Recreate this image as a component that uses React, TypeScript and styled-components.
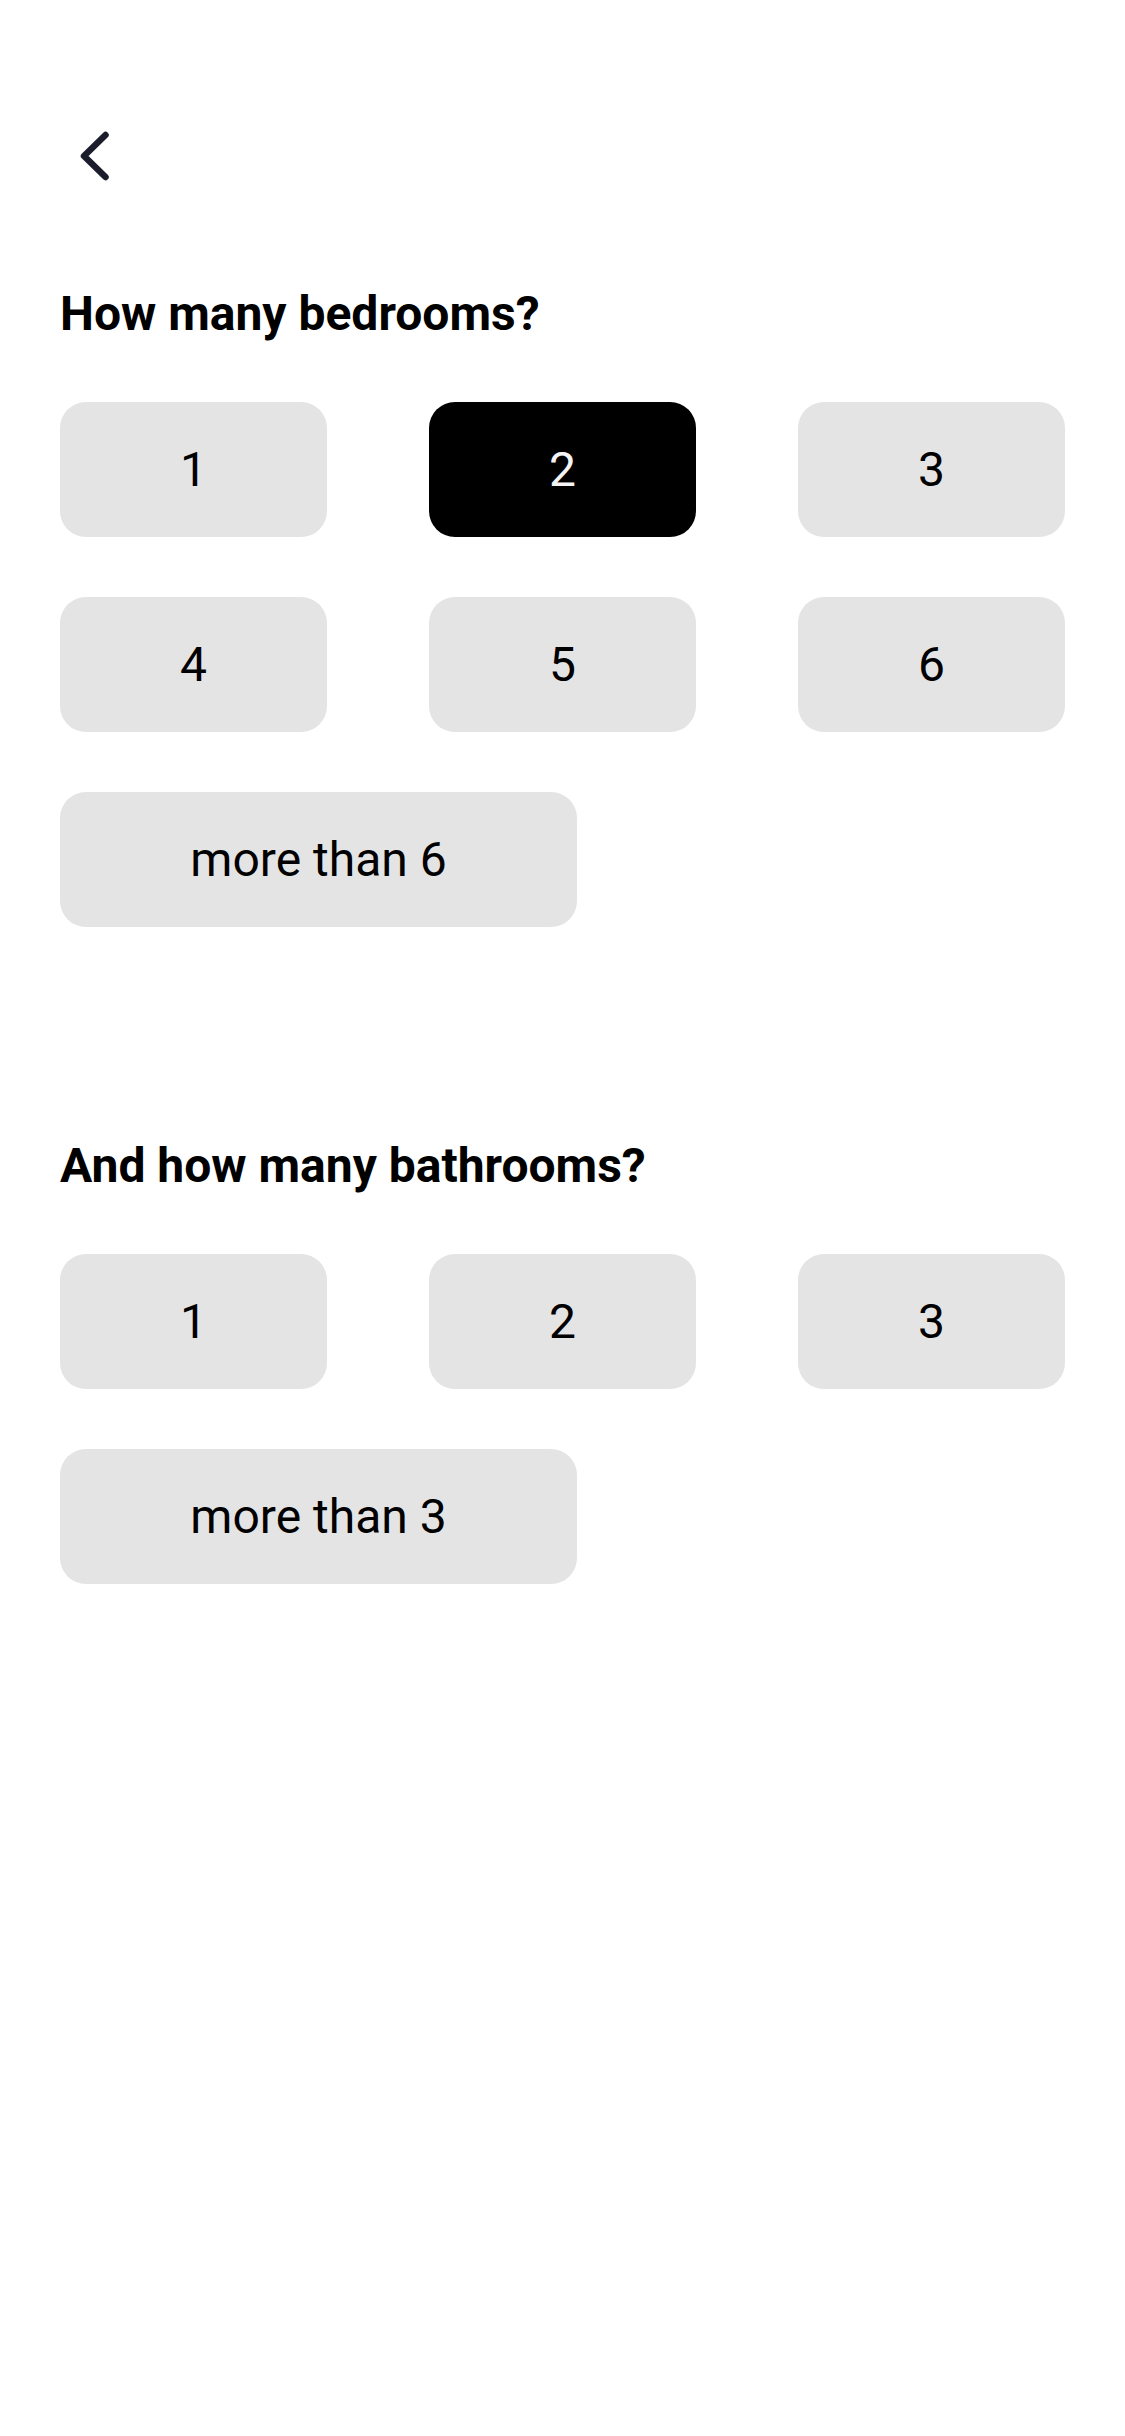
import React, { useState } from "react";
import styled, { createGlobalStyle } from "styled-components";

const Global = createGlobalStyle`
  html, body {
    margin: 0;
    padding: 0;
    background: #ffffff;
  }
  body {
    font-family: Roboto, "Liberation Sans", Arial, sans-serif;
    color: #000;
  }
`;

const Screen = styled.div`
  width: 1125px;
  min-height: 2436px;
  box-sizing: border-box;
  padding: 0 60px;
  display: flex;
  flex-direction: column;
  background: #fff;
`;

const TopBar = styled.header`
  display: flex;
  align-items: center;
  padding-top: 128px;
  height: 56px;
`;

const BackButton = styled.button`
  margin-left: 18px;
  padding: 0;
  border: none;
  background: transparent;
  width: 34px;
  height: 56px;
  display: flex;
  cursor: pointer;
  color: #1b1d2c;
`;

const Sections = styled.main`
  display: flex;
  flex-direction: column;
  gap: 215px;
  margin-top: 106px;
`;

const Section = styled.section`
  display: flex;
  flex-direction: column;
  gap: 64px;
`;

const Heading = styled.h2`
  margin: 0;
  font-size: 48px;
  line-height: 48px;
  font-weight: 700;
  color: #000;
`;

const OptionGrid = styled.div`
  display: grid;
  grid-template-columns: repeat(3, 267px);
  grid-auto-rows: 135px;
  column-gap: 102px;
  row-gap: 60px;
`;

const Option = styled.button<{ $selected?: boolean; $wide?: boolean }>`
  border: none;
  border-radius: 26px;
  background: ${(p) => (p.$selected ? "#000000" : "#e4e4e4")};
  color: ${(p) => (p.$selected ? "#f4f4f4" : "#000000")};
  font-family: Roboto, "Liberation Sans", Arial, sans-serif;
  font-size: 48px;
  font-weight: 400;
  display: flex;
  align-items: center;
  justify-content: center;
  padding: 0;
  cursor: pointer;
  ${(p) => (p.$wide ? "grid-column: 1 / span 2; width: 517px;" : "")}
`;

const ChevronLeft = () => (
  <svg width="34" height="56" viewBox="0 0 34 56" fill="none">
    <path
      d="M27.5 7 L6 28 L27.5 49"
      stroke="currentColor"
      strokeWidth="6.5"
      strokeLinecap="round"
      strokeLinejoin="round"
    />
  </svg>
);

type Opt = { label: string; wide?: boolean };

const bedrooms: Opt[] = [
  { label: "1" },
  { label: "2" },
  { label: "3" },
  { label: "4" },
  { label: "5" },
  { label: "6" },
  { label: "more than 6", wide: true },
];

const bathrooms: Opt[] = [
  { label: "1" },
  { label: "2" },
  { label: "3" },
  { label: "more than 3", wide: true },
];

export default function App() {
  const [bed, setBed] = useState<string>("2");
  const [bath, setBath] = useState<string | null>(null);

  return (
    <>
      <Global />
      <Screen>
        <TopBar>
          <BackButton aria-label="Back">
            <ChevronLeft />
          </BackButton>
        </TopBar>
        <Sections>
          <Section>
            <Heading>How many bedrooms?</Heading>
            <OptionGrid>
              {bedrooms.map((o) => (
                <Option
                  key={o.label}
                  $wide={o.wide}
                  $selected={bed === o.label}
                  onClick={() => setBed(o.label)}
                >
                  {o.label}
                </Option>
              ))}
            </OptionGrid>
          </Section>
          <Section>
            <Heading>And how many bathrooms?</Heading>
            <OptionGrid>
              {bathrooms.map((o) => (
                <Option
                  key={o.label}
                  $wide={o.wide}
                  $selected={bath === o.label}
                  onClick={() => setBath(o.label)}
                >
                  {o.label}
                </Option>
              ))}
            </OptionGrid>
          </Section>
        </Sections>
      </Screen>
    </>
  );
}
